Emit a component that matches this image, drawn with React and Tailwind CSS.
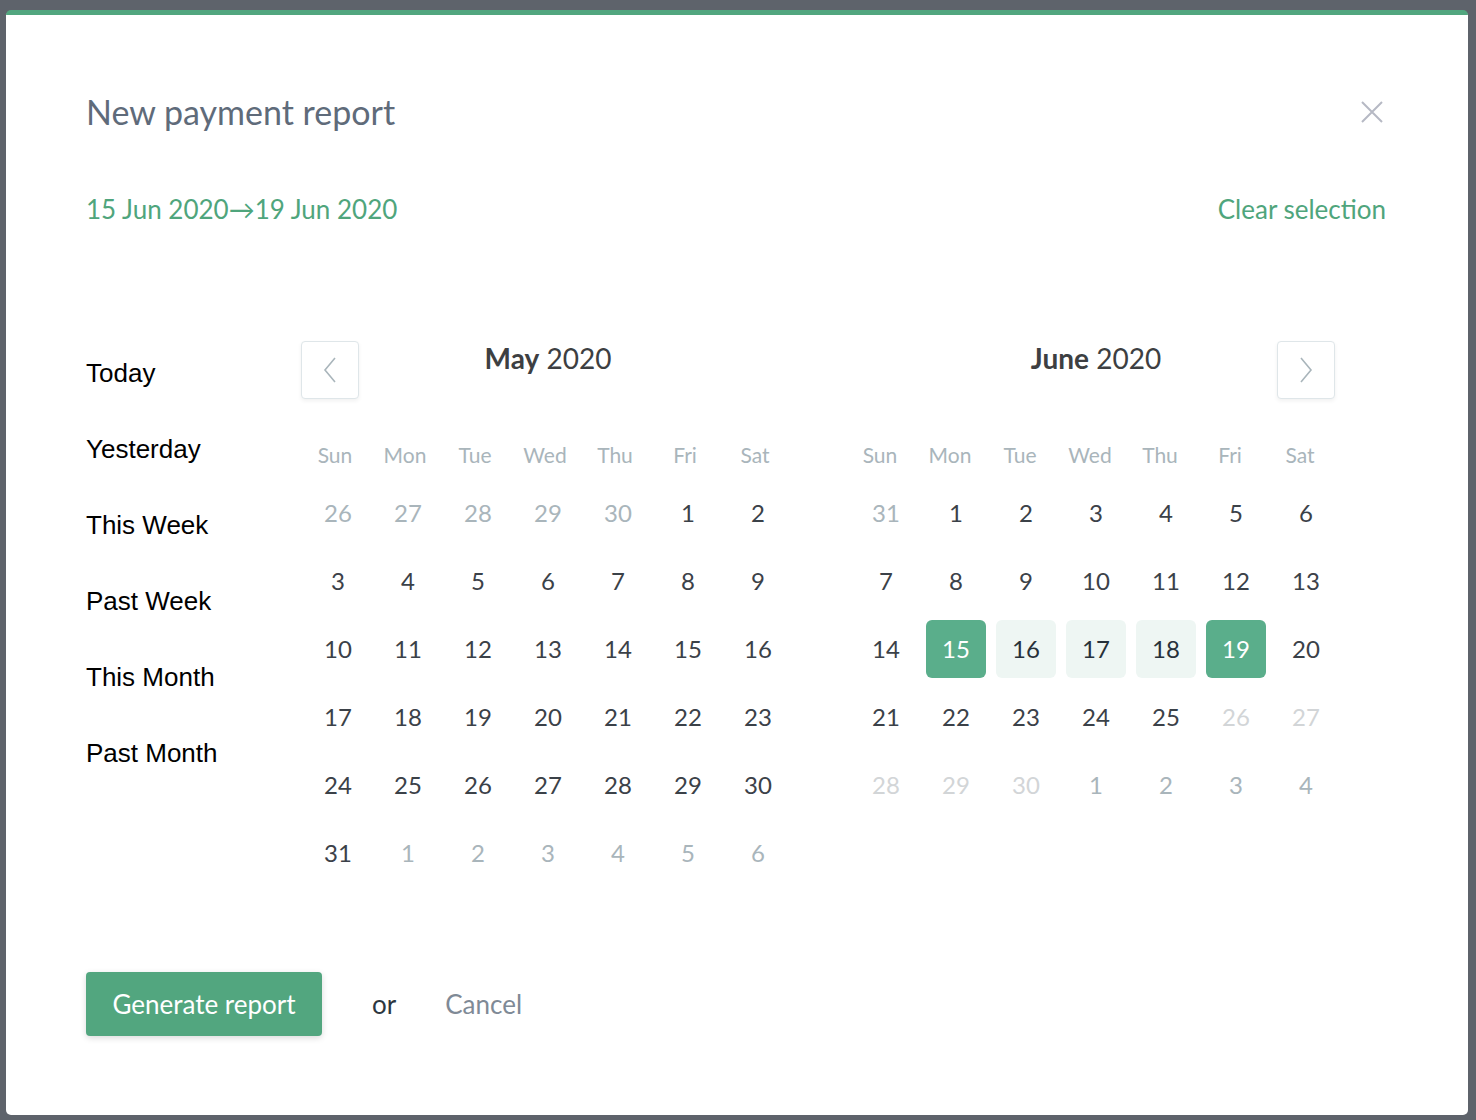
import React from "react";

const WEEK = ["Sun", "Mon", "Tue", "Wed", "Thu", "Fri", "Sat"];

// kind: "o" other month (gray), "d" disabled (lighter), "n" normal, "s" selected edge, "r" in range
const MAY = [
  [["26","o"],["27","o"],["28","o"],["29","o"],["30","o"],["1","n"],["2","n"]],
  [["3","n"],["4","n"],["5","n"],["6","n"],["7","n"],["8","n"],["9","n"]],
  [["10","n"],["11","n"],["12","n"],["13","n"],["14","n"],["15","n"],["16","n"]],
  [["17","n"],["18","n"],["19","n"],["20","n"],["21","n"],["22","n"],["23","n"]],
  [["24","n"],["25","n"],["26","n"],["27","n"],["28","n"],["29","n"],["30","n"]],
  [["31","n"],["1","o"],["2","o"],["3","o"],["4","o"],["5","o"],["6","o"]],
];

const JUNE = [
  [["31","o"],["1","n"],["2","n"],["3","n"],["4","n"],["5","n"],["6","n"]],
  [["7","n"],["8","n"],["9","n"],["10","n"],["11","n"],["12","n"],["13","n"]],
  [["14","n"],["15","s"],["16","r"],["17","r"],["18","r"],["19","s"],["20","n"]],
  [["21","n"],["22","n"],["23","n"],["24","n"],["25","n"],["26","d"],["27","d"]],
  [["28","d"],["29","d"],["30","d"],["1","o"],["2","o"],["3","o"],["4","o"]],
];

const PRESETS = ["Today", "Yesterday", "This Week", "Past Week", "This Month", "Past Month"];

function Day({ label, kind }) {
  let cls = "text-[#3b4148]";
  if (kind === "o") cls = "text-[#a9b5bb]";
  if (kind === "d") cls = "text-[#d2d5d7]";
  if (kind === "s") cls = "bg-[#5aae8b] text-white";
  if (kind === "r") cls = "bg-[#eef6f3] text-[#27313a]";
  return (
    <div className="flex w-[70px] justify-center">
      <div className={`flex h-[58px] w-[60px] items-center justify-center rounded-[6px] text-[24px] leading-none ${cls}`}>
        {label}
      </div>
    </div>
  );
}

function NavButton({ dir }) {
  return (
    <button className="flex h-[58px] w-[58px] items-center justify-center rounded-[4px] border border-[#dfe6e9] bg-white shadow-[0_2px_4px_rgba(0,0,0,0.06)]">
      <svg width="16" height="28" viewBox="0 0 16 28" fill="none" stroke="#a9b5bb" strokeWidth="1.6">
        {dir === "left" ? <path d="M13 2 L3 14 L13 26" /> : <path d="M3 2 L13 14 L3 26" />}
      </svg>
    </button>
  );
}

function Month({ name, rows, nav, weekShift }) {
  return (
    <div className="flex w-[490px] flex-col">
      <div className="grid h-[58px] grid-cols-[58px_1fr_58px] items-start">
        <div className="-ml-[2px]">{nav === "left" && <NavButton dir="left" />}</div>
        <div className="text-center text-[28px] leading-[34px] text-[#3d3f42]">
          <span className="font-bold">{name}</span> 2020
        </div>
        <div className="-ml-[6px]">{nav === "right" && <NavButton dir="right" />}</div>
      </div>
      <div className={`mt-[36px] flex h-[40px] items-center ${weekShift}`}>
        {WEEK.map((w) => (
          <div key={w} className="w-[70px] text-center text-[21px] text-[#a9b5bb]">
            {w}
          </div>
        ))}
      </div>
      <div className="mt-[9px] flex flex-col gap-[10px]">
        {rows.map((r, i) => (
          <div key={i} className="flex">
            {r.map(([l, k], j) => (
              <Day key={j} label={l} kind={k} />
            ))}
          </div>
        ))}
      </div>
    </div>
  );
}

export default function App() {
  return (
    <div className="min-h-[1120px] w-full bg-[#5e636b] pl-[6px] pr-[8px] pt-[10px] pb-[5px]" style={{ fontFamily: "Lato, 'Noto Sans', sans-serif" }}>
      <div className="flex h-[1105px] flex-col rounded-[5px] border-t-[5px] border-[#52a67f] bg-white pl-[80px] pr-[82px] pt-[77px]">
        <div className="flex items-center justify-between">
          <h1 className="text-[34px] leading-[40px] text-[#5f6b7a]">New payment report</h1>
          <svg width="22" height="22" viewBox="0 0 22 22" stroke="#b6b9c4" strokeWidth="2" className="mr-[3px]">
            <path d="M1 1 L21 21 M21 1 L1 21" />
          </svg>
        </div>
        <div className="mt-[60px] flex items-center justify-between text-[26px] leading-[34px] text-[#4fa57c]">
          <span>15 Jun 2020→19 Jun 2020</span>
          <span>Clear selection</span>
        </div>
        <div className="mt-[115px] flex">
          <div className="flex w-[217px] flex-col gap-[48px] pt-[18px]" style={{ fontFamily: "'Liberation Sans', Arial, sans-serif" }}>
            {PRESETS.map((p) => (
              <div key={p} className="text-[26px] leading-[28px] text-black">
                {p}
              </div>
            ))}
          </div>
          <Month name="May" rows={MAY} nav="left" weekShift="-ml-[3px]" />
          <div className="w-[58px]" />
          <Month name="June" rows={JUNE} nav="right" weekShift="-ml-[6px]" />
        </div>
        <div className="mt-[90px] flex items-center">
          <button className="h-[64px] w-[236px] rounded-[4px] bg-[#52a67f] text-[26px] text-white shadow-[0_2px_6px_rgba(0,0,0,0.15)]">
            Generate report
          </button>
          <span className="ml-[50px] text-[26px] text-[#2d3740]">or</span>
          <span className="ml-[49px] text-[26px] text-[#7f8a96]">Cancel</span>
        </div>
      </div>
    </div>
  );
}
